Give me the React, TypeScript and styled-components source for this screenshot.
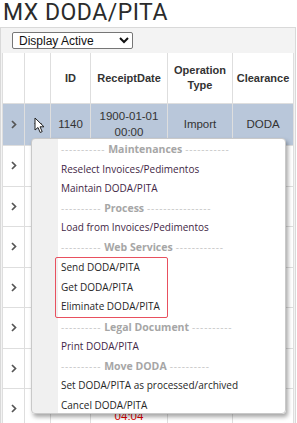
import React from 'react';
import styled, { createGlobalStyle } from 'styled-components';

const GlobalStyle = createGlobalStyle`
  body {
    margin: 0;
    background: #fff;
    font-family: "Liberation Sans", Arial, sans-serif;
  }
`;

type Row = {
  id: string;
  date: string;
  op: string;
  clearance: string;
  selected?: boolean;
  alert?: boolean;
};

const rows: Row[] = [
  { id: '1140', date: '1900-01-01 00:00', op: 'Import', clearance: 'DODA', selected: true },
  { id: '1139', date: '2023-05-17 10:12', op: 'Import', clearance: 'DODA' },
  { id: '1138', date: '2023-05-16 09:41', op: 'Export', clearance: 'PITA' },
  { id: '1137', date: '2023-05-15 17:20', op: 'Import', clearance: 'DODA' },
  { id: '1136', date: '2023-05-12 08:03', op: 'Import', clearance: 'DODA' },
  { id: '1135', date: '2023-05-11 13:55', op: 'Export', clearance: 'DODA' },
  { id: '1134', date: '2023-05-10 11:30', op: 'Import', clearance: 'PITA' },
  { id: '1133', date: '2023-05-09 04:04', op: 'Import', clearance: 'DODA', alert: true },
];

type MenuEntry =
  | { kind: 'header'; label: string; left: number; right: number }
  | { kind: 'item'; label: string; visited?: boolean }
  | { kind: 'group'; items: string[] };

const menu: MenuEntry[] = [
  { kind: 'header', label: 'Maintenances', left: 11, right: 11 },
  { kind: 'item', label: 'Reselect Invoices/Pedimentos', visited: true },
  { kind: 'item', label: 'Maintain DODA/PITA', visited: true },
  { kind: 'header', label: 'Process', left: 10, right: 16 },
  { kind: 'item', label: 'Load from Invoices/Pedimentos', visited: true },
  { kind: 'header', label: 'Web Services', left: 10, right: 12 },
  { kind: 'group', items: ['Send DODA/PITA', 'Get DODA/PITA', 'Eliminate DODA/PITA'] },
  { kind: 'header', label: 'Legal Document', left: 10, right: 10 },
  { kind: 'item', label: 'Print DODA/PITA', visited: true },
  { kind: 'header', label: 'Move DODA', left: 10, right: 10 },
  { kind: 'item', label: 'Set DODA/PITA as processed/archived' },
  { kind: 'item', label: 'Cancel DODA/PITA' },
];

const dashes = (n: number) => '-'.repeat(n);

export default function App() {
  return (
    <>
      <GlobalStyle />
      <Page>
        <Title>MX DODA/PITA</Title>
        <Panel>
          <Toolbar>
            <Select defaultValue="active">
              <option value="active">Display Active</option>
              <option value="all">Display All</option>
            </Select>
          </Toolbar>
          <Grid>
            <colgroup>
              <col style={{ width: 22 }} />
              <col style={{ width: 26 }} />
              <col style={{ width: 40 }} />
              <col style={{ width: 77 }} />
              <col style={{ width: 65 }} />
              <col style={{ width: 61 }} />
            </colgroup>
            <thead>
              <tr>
                <Th />
                <Th />
                <Th>ID</Th>
                <Th>ReceiptDate</Th>
                <Th>Operation Type</Th>
                <Th>Clearance</Th>
              </tr>
            </thead>
            <tbody>
              {rows.map((r) => (
                <BodyRow key={r.id} $selected={r.selected} $alert={r.alert}>
                  <Td>
                    <Chevron viewBox="0 0 6 9" width="6" height="9">
                      <path d="M1 1 L4.5 4.5 L1 8" fill="none" stroke="#555" strokeWidth="1.7" />
                    </Chevron>
                  </Td>
                  <Td>{r.selected && <Caret />}</Td>
                  <Td>{r.id}</Td>
                  <Td>{r.date}</Td>
                  <Td>{r.op}</Td>
                  <Td>{r.clearance}</Td>
                </BodyRow>
              ))}
            </tbody>
          </Grid>
        </Panel>

        <Pointer viewBox="0 0 12 17" width="12" height="17">
          <path
            d="M1 1 L1 13 L4 10.5 L6.2 15.5 L8.2 14.6 L6 9.8 L10 9.8 Z"
            fill="#fff"
            stroke="#222"
            strokeWidth="1"
            strokeLinejoin="round"
          />
        </Pointer>

        <Menu>
          {menu.map((entry, i) => {
            if (entry.kind === 'header') {
              return (
                <MenuHeader key={i}>
                  <Dashes>{dashes(entry.left)}</Dashes>
                  <HeaderLabel>{entry.label}</HeaderLabel>
                  <Dashes>{dashes(entry.right)}</Dashes>
                </MenuHeader>
              );
            }
            if (entry.kind === 'group') {
              return (
                <Highlight key={i}>
                  {entry.items.map((label) => (
                    <MenuItem key={label} $inset>
                      {label}
                    </MenuItem>
                  ))}
                </Highlight>
              );
            }
            return (
              <MenuItem key={i} $visited={entry.visited}>
                {entry.label}
              </MenuItem>
            );
          })}
        </Menu>
      </Page>
    </>
  );
}

const Page = styled.div`
  position: relative;
  width: 297px;
  height: 423px;
  overflow: hidden;
`;

const Title = styled.h1`
  margin: 0;
  padding: 0 0 0 3px;
  height: 27px;
  font-family: Roboto, "Liberation Sans", sans-serif;
  font-weight: 400;
  font-size: 23px;
  line-height: 25px;
  letter-spacing: 0.5px;
  color: #2b2b2b;
`;

const Panel = styled.div`
  height: 396px;
  background: #f3f3f3;
  border: 1px solid #d9d9d9;
  border-bottom: none;
  margin-right: 1px;
  padding: 0 0 0 1px;
`;

const Toolbar = styled.div`
  display: flex;
  align-items: center;
  height: 25px;
  padding-left: 10px;
`;

const Select = styled.select`
  width: 121px;
  height: 17px;
  padding: 0 0 0 2px;
  font-family: "Liberation Sans", Arial, sans-serif;
  font-size: 12px;
  color: #111;
  background: #fff;
  border: 1px solid #767676;
  border-radius: 2px;
`;

const Grid = styled.table`
  width: 292px;
  border-collapse: collapse;
  table-layout: fixed;
  background: #fff;
`;

const Th = styled.th`
  height: 50px;
  padding: 0 3px;
  border: 1px solid #dedede;
  border-top: none;
  font-size: 11px;
  font-weight: 700;
  line-height: 15px;
  color: #333;
  text-align: center;
`;

const BodyRow = styled.tr<{ $selected?: boolean; $alert?: boolean }>`
  height: ${(p) => (p.$selected ? 42 : 40.5)}px;
  background: ${(p) => (p.$selected ? '#b9c7da' : '#fff')};
  color: ${(p) => (p.$alert ? '#e00000' : '#333')};
`;

const Td = styled.td`
  padding: 0 3px;
  border: 1px solid #dedede;
  font-size: 11.5px;
  line-height: 15.5px;
  text-align: center;
  vertical-align: middle;
  overflow: hidden;
`;

const Chevron = styled.svg`
  display: block;
  margin: 0 auto 0 5px;
`;

const Caret = styled.span`
  display: block;
  width: 0;
  height: 0;
  margin: 0 auto;
  border-left: 4px solid transparent;
  border-right: 4px solid transparent;
  border-top: 4px solid #333;
`;

const Pointer = styled.svg`
  position: absolute;
  left: 34px;
  top: 117px;
`;

const Menu = styled.div`
  position: absolute;
  left: 31px;
  top: 138px;
  width: 255px;
  height: 276px;
  box-sizing: border-box;
  padding-top: 1px;
  background: linear-gradient(to right, #f0f0f0 26px, #fff 26px);
  border: 1px solid #c9c9c9;
  border-radius: 4px;
  box-shadow: 2px 3px 4px rgba(0, 0, 0, 0.35);
  font-family: "Open Sans", "Noto Sans", sans-serif;
  font-size: 10px;
`;

const MenuHeader = styled.div`
  display: flex;
  gap: 3px;
  height: 19.5px;
  line-height: 19.5px;
  padding-left: 29px;
  white-space: nowrap;
`;

const Dashes = styled.span`
  color: #c6c6c6;
  letter-spacing: 0.8px;
`;

const HeaderLabel = styled.span`
  color: #a6a6a6;
  font-weight: 700;
  font-size: 10.5px;
`;

const MenuItem = styled.div<{ $visited?: boolean; $inset?: boolean }>`
  height: 19.5px;
  line-height: 19.5px;
  padding-left: ${(p) => (p.$inset ? 5 : 29)}px;
  color: ${(p) => (p.$visited ? '#3f2746' : '#262626')};
  white-space: nowrap;
`;

const Highlight = styled.div`
  width: 111px;
  margin-left: 23px;
  border: 1px solid #e8505f;
  border-radius: 2px;
`;
